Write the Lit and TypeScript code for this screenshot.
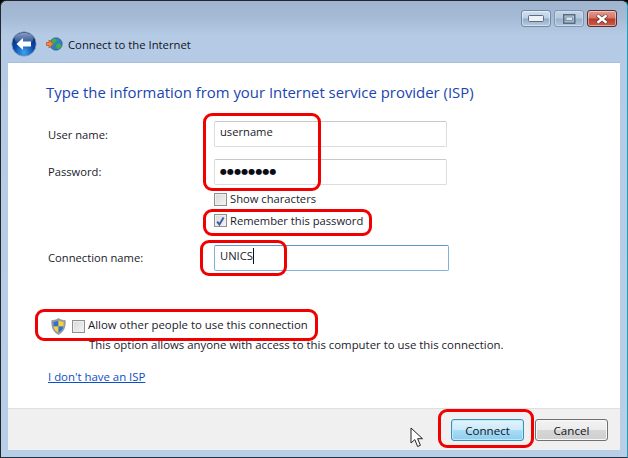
import { LitElement, html, css } from "lit";
import { customElement } from "lit/decorators.js";

@customElement("app-root")
export class AppRoot extends LitElement {
  static styles = css`
    :host { display: block; width: 628px; height: 458px; position: relative; overflow: hidden; background: #000; font-family: "Open Sans", "Noto Sans", sans-serif; font-size: 11.2px; color: #1a1a2a; }
    .win { width: 628px; height: 458px; box-sizing: border-box; border: 1px solid #23262b; border-radius: 6px 6px 0 0; border-right-color: #1f9fc0; border-bottom-color: #233040; background: linear-gradient(180deg, #9fb5cf 0, #a5bad4 16px, #b5cbe5 34px, #b9cfe8 100%); display: flex; flex-direction: column; padding: 0 7px 7px; }
    .title { height: 61px; flex: none; display: flex; flex-direction: column; }
    .caps { display: flex; justify-content: flex-end; gap: 3px; padding: 9px 3px 0 0; height: 17px; }
    .cap { width: 30px; height: 17px; box-sizing: border-box; border: 1px solid #6f88a6; border-radius: 3px; background: linear-gradient(180deg, #d3e0ef 0, #bccee3 48%, #92adc9 52%, #b4cae0 100%); display: flex; align-items: center; justify-content: center; box-shadow: inset 0 0 0 1px rgba(255,255,255,.45); }
    .cap.max { opacity: .72; }
    .cap.close { background: linear-gradient(180deg, #e39c90 0, #d27566 48%, #b93a26 52%, #c65f4b 100%); border-color: #5c2a30; }
    .nav { display: flex; align-items: center; margin: 4px 0 0 3px; height: 26px; }
    .navico { margin-left: 9px; }
    .navt { margin-left: 5px; font-size: 11.3px; color: #10141f; }
    .body { flex: 1; background: #fff; display: flex; flex-direction: column; padding: 0 0 0 40px; box-sizing: border-box; border-top: 1px solid #a9bed8; }
    h1 { margin: 19px 0 0 -2px; font-size: 14.9px; font-weight: 400; color: #1a45b0; line-height: 20px; height: 20px; white-space: nowrap; }
    .row { display: grid; grid-template-columns: 166px auto; align-items: center; }
    .row label { white-space: nowrap; }
    .r2 label, .r3 label { padding-bottom: 2px; }
    .in { box-sizing: border-box; width: 233px; height: 26px; border: 1px solid #dcdcdc; border-top-color: #c9c9c9; border-radius: 2px; padding: 0 5px 5px; display: flex; align-items: center; }
    .in.focus { width: 235px; border-color: #7eb4d6; border-top-color: #5a9bc4; padding-bottom: 5px; }
    .in.pw { padding-bottom: 2px; }
    .dots { font-size: 8px; letter-spacing: .1px; color: #0c0c18; font-family: "DejaVu Sans", sans-serif; }
    .caret { width: 1px; height: 16px; background: #111; display: inline-block; }
    .chk { display: flex; align-items: center; gap: 3px; white-space: nowrap; }
    .box { width: 13px; height: 13px; box-sizing: border-box; border: 1px solid #8e8f8f; background: linear-gradient(135deg, #d8d8d8, #f4f4f4); box-shadow: inset 0 0 0 1px #eee; display: block; flex: none; }
    .lbl { display: block; }
    .c1 .lbl { margin-top: -2px; }
    .allow .lbl { margin-top: -4px; }
    .r1 { margin-top: 19px; }
    .r2 { margin-top: 12px; }
    .c1 { margin: 8px 0 0 166px; }
    .c2 { margin: 7px 0 0 166px; }
    .r3 { margin-top: 17px; }
    .allow { margin: 47px 0 0 3px; display: flex; align-items: center; font-size: 11.4px; }
    .allow .chk { margin-left: 6px; }
    .desc { margin: 2px 0 0 41px; line-height: 15px; white-space: nowrap; font-size: 11.4px; }
    .link { margin-top: 17px; color: #0a50c8; text-decoration: underline; line-height: 15px; width: max-content; font-size: 11.4px; }
    .foot { flex: none; height: 42px; background: #f0f0f0; border-top: 1px solid #dfdfdf; display: flex; justify-content: flex-end; align-items: flex-start; gap: 11px; padding: 10px 12px 0 0; box-sizing: border-box; }
    .btn { width: 73px; height: 22px; box-sizing: border-box; border: 1px solid #707070; border-radius: 3px; background: linear-gradient(180deg, #f3f3f3 0, #ebebeb 48%, #d6d6d6 52%, #cfcfcf 100%); box-shadow: inset 0 0 0 1px #f8f8f8; display: flex; align-items: center; justify-content: center; font-size: 11.6px; color: #141420; font-family: inherit; padding: 0; }
    .btn.def { border-color: #3c8fb8; background: linear-gradient(180deg, #e4f4fc 0, #cbeafa 48%, #a9dcf6 52%, #8fcdef 100%); box-shadow: inset 0 0 0 1px #b8ecfa; }
    .ring { position: absolute; box-sizing: border-box; border: 3px solid #f00000; border-radius: 9px; pointer-events: none; }
    .cursor { position: absolute; left: 410px; top: 427px; }
  `;

  private check(label: string, checked = false) {
    return html`<div class="chk"><span class="box">${checked ? html`<svg width="11" height="11" viewBox="0 0 11 11"><path d="M2.200 5.600 L4.400 8.600 L8.600 1.600" fill="none" stroke="#3d5aa8" stroke-width="1.900"/></svg>` : ""}</span><span class="lbl">${label}</span></div>`;
  }

  render() {
    return html`
      <div class="win">
        <div class="title">
          <div class="caps">
            <div class="cap"><svg width="16" height="7" viewBox="0 0 16 7"><rect x=".5" y=".5" width="15" height="6" rx="1" fill="#eef2f7" stroke="#5b6d84"/></svg></div>
            <div class="cap max"><svg width="13" height="10" viewBox="0 0 13 10"><rect x=".75" y=".75" width="11" height="8.500" fill="none" stroke="#3f4d60" stroke-width="1.500"/><rect x="3" y="3" width="6.500" height="3.500" fill="#eef2f7" stroke="#3f4d60" stroke-width=".6"/></svg></div>
            <div class="cap close"><svg width="14" height="10" viewBox="0 0 14 10"><path d="M2 1 L12 9 M12 1 L2 9" stroke="#5a2a2a" stroke-width="3.600"/><path d="M2.400 1.300 L11.600 8.700 M11.600 1.300 L2.400 8.700" stroke="#fff" stroke-width="2.500"/></svg></div>
          </div>
          <div class="nav">
            <svg width="26" height="26" viewBox="0 0 26 26">
              <defs>
                <radialGradient id="b" cx=".5" cy=".85" r=".75"><stop offset="0" stop-color="#3fa6f0"/><stop offset=".55" stop-color="#0a4aa8"/><stop offset="1" stop-color="#072a70"/></radialGradient>
                <linearGradient id="g" x1="0" y1="0" x2="0" y2="1"><stop offset="0" stop-color="#fff" stop-opacity=".55"/><stop offset="1" stop-color="#fff" stop-opacity=".05"/></linearGradient>
              </defs>
              <circle cx="13" cy="13" r="12.200" fill="url(#b)" stroke="#8fa6c4" stroke-width=".8"/>
              <ellipse cx="13" cy="7.500" rx="9.500" ry="5.800" fill="url(#g)"/>
              <path d="M5.500 13 L12 7 V10.500 H20 V15.500 H12 V19 Z" fill="#fff"/>
            </svg>
            <svg class="navico" width="17" height="14" viewBox="0 0 17 14">
              <circle cx="10" cy="7" r="6.200" fill="#2f7fc4" stroke="#2a5a8a" stroke-width=".7"/>
              <path d="M7 2 C10 1 12 3 10 5 C8 6 7 8 6 6 C5 5 5.500 3 7 2Z M11 7 C13 6 15 7 15.500 9 C14 12 12 12.500 11 11.500 C10 10 10 8 11 7Z" fill="#45b03c"/>
              <path d="M0.500 5.500 H3 V3 L7.500 7 L3 11 V8.500 H.5Z" fill="#ee8a3c" stroke="#b8501a" stroke-width=".7"/>
            </svg>
            <span class="navt">Connect to the Internet</span>
          </div>
        </div>
        <div class="body">
          <h1>Type the information from your Internet service provider (ISP)</h1>
          <div class="row r1"><label>User name:</label><div class="in">username</div></div>
          <div class="row r2"><label>Password:</label><div class="in pw"><span class="dots">●●●●●●●●</span></div></div>
          <div class="c1">${this.check("Show characters")}</div>
          <div class="c2">${this.check("Remember this password", true)}</div>
          <div class="row r3"><label>Connection name:</label><div class="in focus">UNICS<span class="caret"></span></div></div>
          <div class="allow">
            <svg width="15" height="17" viewBox="0 0 15 17">
              <path d="M7.500 .5 C5.500 2 3 2.500 .8 2.500 C.5 8 1.500 13.500 7.500 16.500 C13.500 13.500 14.500 8 14.200 2.500 C12 2.500 9.500 2 7.500 .5Z" fill="#9a9fa6" stroke="#7a7f86" stroke-width=".6"/>
              <path d="M7.500 2.200 C6 3.200 4.200 3.800 2.500 3.900 L2.600 8.500 H7.500Z" fill="#2f72c8"/>
              <path d="M7.500 2.200 C9 3.200 10.800 3.800 12.500 3.900 L12.400 8.500 H7.500Z" fill="#f6d23c"/>
              <path d="M2.600 8.500 H7.500 V14.600 C4.500 13 3 11 2.600 8.500Z" fill="#f6d23c"/>
              <path d="M12.400 8.500 H7.500 V14.600 C10.500 13 12 11 12.400 8.500Z" fill="#2f72c8"/>
            </svg>
            ${this.check("Allow other people to use this connection")}
          </div>
          <div class="desc">This option allows anyone with access to this computer to use this connection.</div>
          <div class="link">I don't have an ISP</div>
        </div>
        <div class="foot">
          <button class="btn def">Connect</button>
          <button class="btn">Cancel</button>
        </div>
      </div>
      <div class="ring" style="left:203px;top:113px;width:118px;height:78px"></div>
      <div class="ring" style="left:203px;top:209px;width:169px;height:27px"></div>
      <div class="ring" style="left:200px;top:240px;width:87px;height:36px"></div>
      <div class="ring" style="left:35px;top:309px;width:283px;height:32px"></div>
      <div class="ring" style="left:438px;top:409px;width:96px;height:39px"></div>
      <svg class="cursor" width="16" height="22" viewBox="0 0 16 22">
        <path d="M1 1 V16 L4.800 12.600 L7.600 19.500 L10.400 18.300 L7.600 11.700 H12.500 Z" fill="#fff" stroke="#222" stroke-width="1"/>
      </svg>
    `;
  }
}
